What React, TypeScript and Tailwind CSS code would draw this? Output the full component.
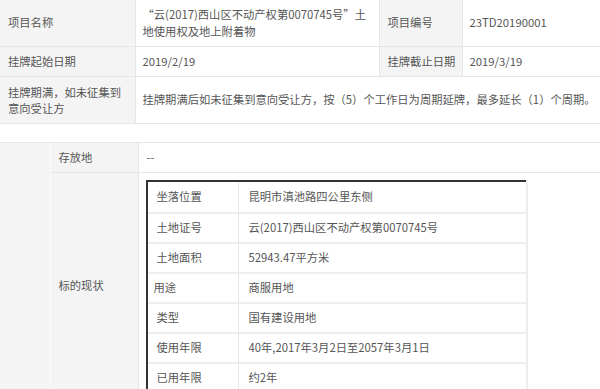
const font = "font-['Noto_Sans_CJK_SC','Noto_Sans',sans-serif]";

const landRows: [string, string, string][] = [
  ["坐落位置", "昆明市滇池路四公里东侧", "pl-[9px]"],
  ["土地证号", "云(2017)西山区不动产权第0070745号", "pl-[9px]"],
  ["土地面积", "52943.47平方米", "pl-[9px]"],
  ["用途", "商服用地", "pl-[6px]"],
  ["类型", "国有建设用地", "pl-[9px]"],
  ["使用年限", "40年,2017年3月2日至2057年3月1日", "pl-[9px]"],
  ["已用年限", "约2年", "pl-[9px]"],
];

function InfoTable() {
  const label = "bg-[#f4f4f4] border border-[#e6e6e6] align-middle pl-[8px] p-0";
  const value = "bg-white border border-[#e6e6e6] align-middle pl-[7px] p-0";
  return (
    <table className="w-[600px] table-fixed border-collapse">
      <colgroup>
        <col className="w-[135px]" />
        <col className="w-[244px]" />
        <col className="w-[83px]" />
        <col className="w-[138px]" />
      </colgroup>
      <tbody>
        <tr className="h-[46px]">
          <td className={`${label} border-t-0 border-l-0`}>项目名称</td>
          <td className={`${value} border-t-0 leading-[17px]`}>
            “云(2017)西山区不动产权第0070745号”土
            <br />
            地使用权及地上附着物
          </td>
          <td className={`${label} border-t-0`}>项目编号</td>
          <td className={`${value} border-t-0 border-r-0`}>23TD20190001</td>
        </tr>
        <tr className="h-[30px]">
          <td className={`${label} border-l-0`}>挂牌起始日期</td>
          <td className={value}>2019/2/19</td>
          <td className={label}>挂牌截止日期</td>
          <td className={`${value} border-r-0`}>2019/3/19</td>
        </tr>
        <tr className="h-[47px]">
          <td className={`${label} border-l-0 leading-[16px]`}>
            挂牌期满，如未征集到
            <br />
            意向受让方
          </td>
          <td colSpan={3} className={`${value} border-r-0 whitespace-nowrap`}>
            挂牌期满后如未征集到意向受让方，按（5）个工作日为周期延牌，最多延长（1）个周期。
          </td>
        </tr>
      </tbody>
    </table>
  );
}

function LandTable() {
  return (
    <div className="flex w-[382px]">
      <div className="w-[2px] shrink-0 bg-[#333333]" />
      <div className="flex-1">
        <div className="h-[2px] bg-[#333333]" />
        <table className="w-full table-fixed border-separate border-spacing-0">
          <colgroup>
            <col className="w-[91px]" />
            <col />
          </colgroup>
          <tbody>
            {landRows.map(([k, v, pad], i) => (
              <tr key={k} className="h-[30px]">
                <td
                  className={`${pad} p-0 align-middle border-r border-r-[#e6e6e6] ${
                    i > 0 ? "border-t-2 border-t-[#eeeeee]" : ""
                  }`}
                >
                  {k}
                </td>
                <td
                  className={`pl-[10px] p-0 align-middle whitespace-nowrap ${
                    i > 0 ? "border-t-2 border-t-[#eeeeee]" : ""
                  }`}
                >
                  {v}
                </td>
              </tr>
            ))}
          </tbody>
        </table>
      </div>
      <div className="w-[2px] shrink-0 bg-[#eeeeee]" />
    </div>
  );
}

function StatusTable() {
  return (
    <table className="mt-[18px] w-[600px] table-fixed border-collapse">
      <colgroup>
        <col className="w-[50px]" />
        <col className="w-[88px]" />
        <col className="w-[462px]" />
      </colgroup>
      <tbody>
        <tr className="h-[30px]">
          <td rowSpan={2} className="bg-[#f4f4f4] border border-[#e6e6e6] border-l-0 border-r-[#fafafa] p-0" />
          <td className="bg-[#f4f4f4] border border-[#e6e6e6] border-l-[#fafafa] pl-[8px] p-0 align-middle">存放地</td>
          <td className="bg-white border border-[#e6e6e6] border-r-0 pl-[8px] p-0 align-middle">--</td>
        </tr>
        <tr>
          <td className="bg-[#f4f4f4] border border-[#e6e6e6] border-l-[#fafafa] pl-[8px] p-0 align-middle">标的现状</td>
          <td className="bg-white border border-[#e6e6e6] border-r-0 p-[7px] align-top">
            <LandTable />
          </td>
        </tr>
      </tbody>
    </table>
  );
}

export default function App() {
  return (
    <div className={`${font} w-[600px] h-[389px] overflow-hidden bg-white text-[11.3px] text-[#555]`}>
      <InfoTable />
      <StatusTable />
    </div>
  );
}
